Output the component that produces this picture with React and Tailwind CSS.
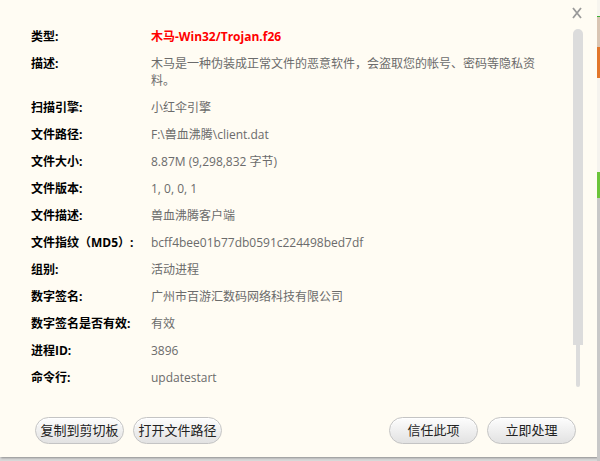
import React from 'react';

const rows = [
  { label: '扫描引擎:', value: '小红伞引擎' },
  { label: '文件路径:', value: 'F:\\兽血沸腾\\client.dat' },
  { label: '文件大小:', value: '8.87M (9,298,832 字节)' },
  { label: '文件版本:', value: '1, 0, 0, 1' },
  { label: '文件描述:', value: '兽血沸腾客户端' },
  { label: '文件指纹（MD5）:', value: 'bcff4bee01b77db0591c224498bed7df' },
  { label: '组别:', value: '活动进程' },
  { label: '数字签名:', value: '广州市百游汇数码网络科技有限公司' },
  { label: '数字签名是否有效:', value: '有效' },
  { label: '进程ID:', value: '3896' },
  { label: '命令行:', value: 'updatestart' },
];

function Row({ label, children }) {
  return (
    <div className="flex py-[5px] leading-[17px]">
      <div className="w-[120px] shrink-0 font-bold text-black">{label}</div>
      <div className="flex-1 text-[#6b6b6b]">{children}</div>
    </div>
  );
}

function Btn({ children }) {
  return (
    <button className="h-[27px] w-[89px] rounded-full border border-[#c4c4c4] bg-gradient-to-b from-[#fdfdfd] to-[#e2e2e2] text-[13px] text-[#222] shadow-[inset_0_1px_0_#fff]">
      {children}
    </button>
  );
}

export default function App() {
  return (
    <div
      className="relative flex h-[461px] w-[600px] overflow-hidden bg-[#d8d8d8] text-[12px]"
      style={{ fontFamily: '"Open Sans", "Noto Sans CJK SC", sans-serif' }}
    >
      <div className="flex h-[457px] w-[597px] shrink-0 flex-col bg-[#fffcf3] shadow-[1px_1px_2px_rgba(0,0,0,0.35)]">
        <div className="flex flex-1">
          <div className="flex-1 pl-[31px] pr-[20px] pt-[23px]">
            <Row label="类型:">
              <span className="font-bold text-[#f00]">木马-Win32/Trojan.f26</span>
            </Row>
            <Row label="描述:">
              <div className="w-[390px]">
                木马是一种伪装成正常文件的恶意软件，会盗取您的帐号、密码等隐私资料。
              </div>
            </Row>
            {rows.map((r) => (
              <Row key={r.label} label={r.label}>
                {r.value}
              </Row>
            ))}
          </div>
          <div className="flex w-[30px] shrink-0 flex-col items-start pl-[6px]">
            <svg width="10" height="12" viewBox="0 0 10 12" className="ml-[-1px] mt-[7px]">
              <path d="M1 1 L9 11 M9 1 L1 11" stroke="#9a9a9a" strokeWidth="1.8" />
            </svg>
            <div className="mt-[10px] h-[316px] w-[10px] rounded-t-[5px] bg-[#dcdcdc]" />
            <div className="ml-[3px] h-[42px] w-[4px] rounded-b-[2px] bg-[#dcdcdc]" />
          </div>
        </div>
        <div className="flex items-center gap-[9px] pb-[13px] pl-[35px] pr-[21px]">
          <Btn>复制到剪切板</Btn>
          <Btn>打开文件路径</Btn>
          <div className="flex-1" />
          <Btn>信任此项</Btn>
          <Btn>立即处理</Btn>
        </div>
      </div>
      <div className="flex w-[3px] flex-col bg-[#f7f5ef]">
        <div className="h-[16px]" />
        <div className="h-[1px] bg-[#3cb034]" />
        <div className="h-[30px] bg-[#d9c5b3]" />
        <div className="h-[31px] bg-[#e2762a]" />
        <div className="h-[94px] bg-[#f5f3ee]" />
        <div className="h-[26px] bg-[#6cc43a]" />
        <div className="flex-1 bg-[#c8c8c8]" />
      </div>
    </div>
  );
}
